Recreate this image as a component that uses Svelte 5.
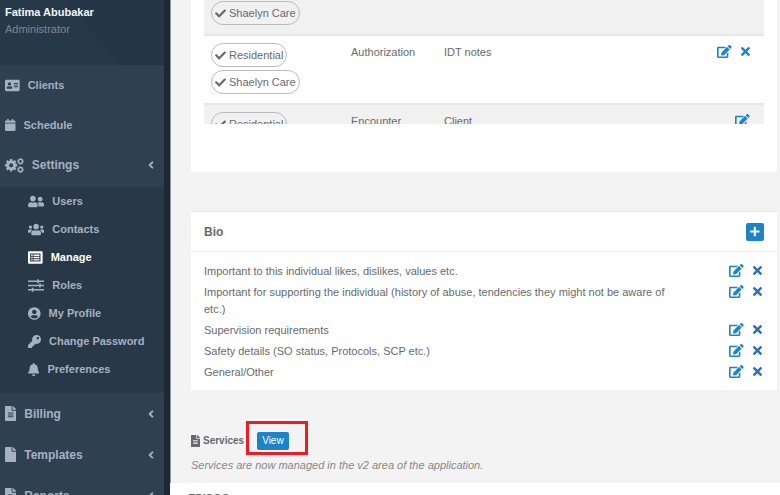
<script lang="ts">
  type Icon = { w: number; d: string };

  // toothed wheel outline with a round hole in the middle
  function gear(cx: number, cy: number, r: number, root: number, hole: number, teeth: number) {
    const pts: string[] = [];
    const step = (Math.PI * 2) / teeth;
    for (let i = 0; i < teeth; i++) {
      const a = i * step;
      for (const [f, rad] of [[-0.32, root], [-0.24, r], [0.24, r], [0.32, root]]) {
        const x = cx + Math.cos(a + f * step) * rad;
        const y = cy + Math.sin(a + f * step) * rad;
        pts.push(`${x.toFixed(1)} ${y.toFixed(1)}`);
      }
    }
    return `M${pts.join('L')}ZM${cx - hole} ${cy}a${hole} ${hole} 0 1 0 ${hole * 2} 0a${hole} ${hole} 0 1 0 ${-hole * 2} 0Z`;
  }

  const icons: Record<string, Icon> = {
    card: { w: 576, d: 'M528 32H48C21.5 32 0 53.5 0 80v352c0 26.5 21.5 48 48 48h480c26.5 0 48-21.5 48-48V80c0-26.5-21.5-48-48-48zm-352 96c35.3 0 64 28.7 64 64s-28.7 64-64 64-64-28.7-64-64 28.7-64 64-64zm112 236.8c0 10.6-10 19.2-22.4 19.2H86.4C74 384 64 375.4 64 364.8v-19.2c0-31.8 30.1-57.6 67.2-57.6h5c12.3 5.1 25.7 8 39.8 8s27.6-2.9 39.8-8h5c37.1 0 67.2 25.8 67.2 57.6v19.2zM512 312c0 4.4-3.6 8-8 8H360c-4.4 0-8-3.6-8-8v-16c0-4.4 3.6-8 8-8h144c4.4 0 8 3.6 8 8v16zm0-64c0 4.4-3.6 8-8 8H360c-4.4 0-8-3.6-8-8v-16c0-4.4 3.6-8 8-8h144c4.4 0 8 3.6 8 8v16zm0-64c0 4.4-3.6 8-8 8H360c-4.4 0-8-3.6-8-8v-16c0-4.4 3.6-8 8-8h144c4.4 0 8 3.6 8 8v16z' },
    calendar: { w: 448, d: 'M12 192h424c6.6 0 12 5.4 12 12v260c0 26.5-21.5 48-48 48H48c-26.5 0-48-21.5-48-48V204c0-6.6 5.4-12 12-12zm436-44v-36c0-26.5-21.5-48-48-48h-48V12c0-6.6-5.4-12-12-12h-40c-6.6 0-12 5.4-12 12v52H160V12c0-6.6-5.4-12-12-12h-40c-6.6 0-12 5.4-12 12v52H48C21.5 64 0 85.5 0 112v36c0 6.6 5.4 12 12 12h424c6.6 0 12-5.4 12-12z' },
    cogs: { w: 640, d: gear(210, 250, 216, 168, 72, 8) + gear(528, 116, 112, 94, 46, 7) + gear(528, 396, 112, 94, 46, 7) },
    friends: { w: 640, d: 'M192 256c61.9 0 112-50.1 112-112S253.9 32 192 32 80 82.1 80 144s50.1 112 112 112zm76.8 32h-8.3c-20.8 10-43.9 16-68.5 16s-47.6-6-68.5-16h-8.3C51.6 288 0 339.6 0 403.2V432c0 26.5 21.5 48 48 48h288c26.5 0 48-21.5 48-48v-28.8c0-63.6-51.6-115.2-115.2-115.2zM480 256c53 0 96-43 96-96s-43-96-96-96-96 43-96 96 43 96 96 96zm48 32h-3.8c-13.9 4.8-28.6 8-44.2 8s-30.3-3.2-44.2-8H432c-20.4 0-39.2 5.9-55.7 15.4 24.4 26.3 39.7 61.2 39.7 99.8v38.4c0 2.2-.5 4.3-.6 6.4H592c26.5 0 48-21.5 48-48 0-61.9-50.1-112-112-112z' },
    users: { w: 640, d: 'M96 224c35.3 0 64-28.7 64-64s-28.7-64-64-64-64 28.7-64 64 28.7 64 64 64zm448 0c35.3 0 64-28.7 64-64s-28.7-64-64-64-64 28.7-64 64 28.7 64 64 64zm32 32h-64c-17.6 0-33.5 7.1-45.1 18.6 40.3 22.1 68.9 62 75.1 109.4h66c17.7 0 32-14.3 32-32v-32c0-35.3-28.7-64-64-64zm-256 0c61.9 0 112-50.1 112-112S381.9 32 320 32 208 82.1 208 144s50.1 112 112 112zm76.8 32h-8.3c-20.8 10-43.9 16-68.5 16s-47.6-6-68.5-16h-8.3C179.6 288 128 339.6 128 403.2V432c0 26.5 21.5 48 48 48h288c26.5 0 48-21.5 48-48v-28.8c0-63.6-51.6-115.2-115.2-115.2zm-223.7-13.4C161.5 263.1 145.6 256 128 256H64c-35.3 0-64 28.7-64 64v32c0 17.7 14.3 32 32 32h65.9c6.3-47.4 34.9-87.3 75.2-109.4z' },
    list: { w: 576, d: 'M40 10H536Q576 10 576 50V462Q576 502 536 502H40Q0 502 0 462V50Q0 10 40 10ZM84 94V418H492V94ZM126 134H184V192H126ZM218 134H450V192H218ZM126 227H184V285H126ZM218 227H450V285H218ZM126 320H184V378H126ZM218 320H450V378H218Z' },
    sliders: { w: 640, d: 'M0 60H370V8H432V60H640V120H432V168H370V120H0ZM0 226H440V174H502V226H640V286H502V338H440V286H0ZM0 392H150V340H212V392H640V452H212V504H150V452H0Z' },
    profile: { w: 496, d: 'M248 8C111 8 0 119 0 256s111 248 248 248 248-111 248-248S385 8 248 8zm0 96c48.6 0 88 39.4 88 88s-39.4 88-88 88-88-39.4-88-88 39.4-88 88-88zm0 344c-58.7 0-111.3-26.6-146.5-68.2 18.8-35.4 55.6-59.8 98.5-59.8 2.4 0 4.8.4 7.1 1.1 13 4.2 26.6 6.9 40.9 6.9 14.3 0 28-2.7 40.9-6.9 2.3-.7 4.7-1.1 7.1-1.1 42.9 0 79.7 24.4 98.5 59.8C359.3 421.4 306.7 448 248 448z' },
    key: { w: 512, d: 'M512 176.001C512 273.203 433.202 352 336 352c-11.22 0-22.19-1.062-32.827-3.069l-24.012 27.014A23.999 23.999 0 0 1 261.223 384H224v40c0 13.255-10.745 24-24 24h-40v40c0 13.255-10.745 24-24 24H24c-13.255 0-24-10.745-24-24v-78.059c0-6.365 2.529-12.47 7.029-16.971l161.802-161.802C163.108 213.814 160 195.271 160 176 160 78.798 238.797.001 335.999 0 433.488-.001 512 78.511 512 176.001zM336 128c0 26.51 21.49 48 48 48s48-21.49 48-48-21.49-48-48-48-48 21.49-48 48z' },
    bell: { w: 448, d: 'M224 512c35.32 0 63.97-28.65 63.97-64H160.03c0 35.35 28.65 64 63.97 64zm215.39-149.71c-19.32-20.76-55.47-51.99-55.47-154.29 0-77.7-54.48-139.9-127.94-155.16V32c0-17.67-14.32-32-31.98-32s-31.98 14.33-31.98 32v20.84C118.56 68.1 64.08 130.3 64.08 208c0 102.3-36.15 133.53-55.47 154.29-6 6.45-8.66 14.16-8.61 21.71.11 16.4 12.98 32 32.1 32h383.8c19.12 0 32-15.6 32.1-32 .05-7.55-2.61-15.27-8.61-21.71z' },
    fileText: { w: 384, d: 'M224 136V0H24C10.7 0 0 10.7 0 24v464c0 13.3 10.7 24 24 24h336c13.3 0 24-10.7 24-24V160H248c-13.2 0-24-10.8-24-24zm64 236c0 6.6-5.4 12-12 12H108c-6.6 0-12-5.4-12-12v-8c0-6.6 5.4-12 12-12h168c6.6 0 12 5.4 12 12v8zm0-64c0 6.6-5.4 12-12 12H108c-6.6 0-12-5.4-12-12v-8c0-6.6 5.4-12 12-12h168c6.6 0 12 5.4 12 12v8zm0-72v8c0 6.6-5.4 12-12 12H108c-6.6 0-12-5.4-12-12v-8c0-6.6 5.4-12 12-12h168c6.6 0 12 5.4 12 12zm96-114.1v6.1H256V0h6.1c6.4 0 12.5 2.5 17 7l97.9 98c4.5 4.5 7 10.6 7 16.9z' },
    file: { w: 384, d: 'M224 136V0H24C10.7 0 0 10.7 0 24v464c0 13.3 10.7 24 24 24h336c13.3 0 24-10.7 24-24V160H248c-13.2 0-24-10.8-24-24zm160-14.1v6.1H256V0h6.1c6.4 0 12.5 2.5 17 7l97.9 98c4.5 4.5 7 10.6 7 16.9z' },
    angle: { w: 256, d: 'M31.7 239l136-136c9.4-9.4 24.6-9.4 33.9 0l22.6 22.6c9.4 9.4 9.4 24.6 0 33.9L127.9 256l96.4 96.4c9.4 9.4 9.4 24.6 0 33.9L201.7 409c-9.4 9.4-24.6 9.4-33.9 0l-136-136c-9.5-9.4-9.5-24.6-.1-34z' },
    check: { w: 512, d: 'M173.898 439.404l-166.4-166.4c-9.997-9.997-9.997-26.206 0-36.204l36.203-36.204c9.997-9.998 26.207-9.998 36.204 0L192 312.69 432.095 72.596c9.997-9.997 26.207-9.997 36.204 0l36.203 36.204c9.997 9.997 9.997 26.206 0 36.204l-294.4 294.401c-9.998 9.997-26.207 9.997-36.204-.001z' },
    edit: { w: 576, d: 'M402.6 83.2l90.2 90.2c3.8 3.8 3.8 10 0 13.8L274.4 405.6l-92.8 10.3c-12.4 1.4-22.9-9.1-21.5-21.5l10.3-92.8L388.8 83.2c3.8-3.8 10-3.8 13.8 0zm162-22.9l-48.8-48.8c-15.2-15.2-39.9-15.2-55.2 0l-35.4 35.4c-3.8 3.8-3.8 10 0 13.8l90.2 90.2c3.8 3.8 10 3.8 13.8 0l35.4-35.4c15.2-15.3 15.2-40 0-55.2zM384 346.2V448H64V128h229.8c3.2 0 6.2-1.3 8.5-3.5l40-40c7.6-7.6 2.2-20.5-8.5-20.5H48C21.5 64 0 85.5 0 112v352c0 26.5 21.5 48 48 48h352c26.5 0 48-21.5 48-48V306.2c0-10.7-12.9-16-20.5-8.5l-40 40c-2.2 2.3-3.5 5.3-3.5 8.5z' },
    times: { w: 352, d: 'M242.72 256l100.07-100.07c12.28-12.28 12.28-32.19 0-44.48l-22.24-22.24c-12.28-12.28-32.19-12.28-44.48 0L176 189.28 75.93 89.21c-12.28-12.28-32.19-12.28-44.48 0L9.21 111.45c-12.28 12.28-12.28 32.19 0 44.48L109.28 256 9.21 356.07c-12.28 12.28-12.28 32.19 0 44.48l22.24 22.24c12.28 12.28 32.2 12.28 44.48 0L176 322.72l100.07 100.07c12.28 12.28 32.2 12.28 44.48 0l22.24-22.24c12.28-12.28 12.28-32.19 0-44.48L242.72 256z' },
    plus: { w: 448, d: 'M416 208H272V64c0-17.67-14.33-32-32-32h-32c-17.67 0-32 14.33-32 32v144H32c-17.67 0-32 14.33-32 32v32c0 17.67 14.33 32 32 32h144v144c0 17.67 14.33 32 32 32h32c17.67 0 32-14.33 32-32V304h144c17.67 0 32-14.33 32-32v-32c0-17.67-14.33-32-32-32z' },
  };

  const topMenu = [
    { label: 'Clients', icon: 'card' },
    { label: 'Schedule', icon: 'calendar' },
  ];
  const settingsMenu = [
    { label: 'Users', icon: 'friends' },
    { label: 'Contacts', icon: 'users' },
    { label: 'Manage', icon: 'list' },
    { label: 'Roles', icon: 'sliders' },
    { label: 'My Profile', icon: 'profile' },
    { label: 'Change Password', icon: 'key' },
    { label: 'Preferences', icon: 'bell' },
  ];
  const bottomMenu = [
    { label: 'Billing', icon: 'fileText' },
    { label: 'Templates', icon: 'file' },
    { label: 'Reports', icon: 'fileText' },
  ];

  const rows = [
    { tags: ['Shaelyn Care'], type: '', name: '', edit: false, remove: false },
    { tags: ['Residential', 'Shaelyn Care'], type: 'Authorization', name: 'IDT notes', edit: true, remove: true },
    { tags: ['Residential'], type: 'Encounter', name: 'Client', edit: true, remove: false },
  ];

  let bio = $state([
    'Important to this individual likes, dislikes, values etc.',
    'Important for supporting the individual (history of abuse, tendencies they might not be aware of etc.)',
    'Supervision requirements',
    'Safety details (SO status, Protocols, SCP etc.)',
    'General/Other',
  ]);
  let active = $state('Manage');
</script>

{#snippet icon(name: string)}
  <svg class="icon icon-{name}" viewBox="0 0 {icons[name].w} 512" aria-hidden="true">
    <path d={icons[name].d} fill-rule="evenodd" />
  </svg>
{/snippet}

<div class="page">
  <aside class="sidebar">
    <div class="profile">
      <strong>Fatima Abubakar</strong>
      <span>Administrator</span>
    </div>
    <nav>
      {#each topMenu as item}
        <a class="item small" href="#{item.label}">{@render icon(item.icon)}{item.label}</a>
      {/each}
      <a class="item" href="#Settings">{@render icon('cogs')}Settings<span class="arrow">{@render icon('angle')}</span></a>
      <div class="submenu">
        {#each settingsMenu as item}
          <a class="sub" class:active={active === item.label} href="#{item.label}" onclick={() => (active = item.label)}>
            {@render icon(item.icon)}{item.label}
          </a>
        {/each}
      </div>
      {#each bottomMenu as item}
        <a class="item tall" href="#{item.label}">{@render icon(item.icon)}{item.label}<span class="arrow">{@render icon('angle')}</span></a>
      {/each}
    </nav>
  </aside>

  <main class="content">
    <section class="panel types">
      <div class="table-wrap">
        <table>
          <tbody>
            {#each rows as row}
              <tr>
                <td class="tags">
                  {#each row.tags as tag}
                    <span class="tag">{@render icon('check')}{tag}</span>
                  {/each}
                </td>
                <td class="type">{row.type}</td>
                <td>{row.name}</td>
                <td class="tools">
                  {#if row.edit}<button class="tool" aria-label="Edit {row.name}">{@render icon('edit')}</button>{/if}
                  {#if row.remove}<button class="tool" aria-label="Remove {row.name}">{@render icon('times')}</button>{/if}
                </td>
              </tr>
            {/each}
          </tbody>
        </table>
      </div>
    </section>

    <section class="panel bio">
      <header>
        <h2>Bio</h2>
        <button class="add" aria-label="Add bio section">{@render icon('plus')}</button>
      </header>
      <ul>
        {#each bio as entry, i}
          <li>
            <span class="entry">{entry}</span>
            <button class="tool" aria-label="Edit {entry}">{@render icon('edit')}</button>
            <button class="tool remove" aria-label="Remove {entry}" onclick={() => bio.splice(i, 1)}>{@render icon('times')}</button>
          </li>
        {/each}
      </ul>
    </section>

    <section class="services">
      <div class="services-head">
        <h3>{@render icon('fileText')}Services</h3>
        <div class="marker"><button class="view">View</button></div>
      </div>
      <p>Services are now managed in the v2 area of the application.</p>
    </section>

    <footer>EPISOC</footer>
  </main>
</div>

<style>
  :global(body) { margin: 0; overflow: hidden; }
  .page { display: flex; height: 100vh; overflow: hidden; background: #f3f3f4; color: #676a6c; font: 11px/16px "Liberation Sans", Arial, sans-serif; }
  .icon { display: block; height: 12px; fill: currentColor; flex: none; }
  a { color: inherit; text-decoration: none; }
  button { font: inherit; border: 0; padding: 0; cursor: pointer; }
  h2, h3, p, ul { margin: 0; padding: 0; }

  .sidebar { flex: 0 0 164px; background: #2f4050; color: #a7b1c2; border-right: 6px solid #1d2832; box-shadow: 1px 0 #8a949e; font-weight: 700; }
  .profile { height: 60px; padding: 5px 5px 0; display: flex; flex-direction: column; background: linear-gradient(50deg, #263949 55%, #243646 55%); }
  .profile strong { color: #f2f6fa; line-height: 15px; }
  .profile span { color: #80868b; font-weight: 400; line-height: 18px; }
  .item { display: flex; align-items: center; gap: 8px; height: 40px; padding: 0 10px 0 5px; font-size: 12px; }
  .item.small { font-size: 11px; }
  .item.tall { height: 41px; }
  .arrow { margin-left: auto; }
  .submenu { margin-top: 2px; padding-bottom: 10px; background: #293846; }
  .sub { display: flex; align-items: center; gap: 8px; height: 28px; padding-left: 28px; }
  .sub .icon, .icon-card { height: 13px; }
  .sub.active { color: #fff; }
  .icon-cogs, .tall .icon-fileText, .icon-file { height: 15px; }

  .content { flex: 1; min-width: 0; display: flex; flex-direction: column; }
  .content > * { flex-shrink: 0; }
  .panel { margin: 0 3px 0 21px; background: #fff; }
  .types { padding: 0 13px 48px; }
  .table-wrap { height: 124px; overflow: hidden; }
  table { width: 100%; border-collapse: collapse; }
  tr:nth-child(odd) { background: #f1f1f1; }
  td { padding: 8px 7px 6px; vertical-align: top; text-align: left; }
  tr + tr td { border-top: 2px solid #e7e7e7; }
  .tags { width: 126px; padding-top: 7px; }
  .tools { padding-top: 9px; }
  tr:first-child td { padding-top: 1px; }
  .type { width: 79px; }
  .tag { display: flex; align-items: center; gap: 3px; width: max-content; height: 22px; margin-bottom: 3px; padding: 0 3px; border: 1px solid #bbb; border-radius: 12px; }
  .icon-check { height: 11px; }
  td.tools { text-align: right; padding-right: 14px; }
  .tool { display: inline-block; background: none; color: #1c84c6; vertical-align: top; }
  .tool .icon { height: 13px; }
  .tool.remove { color: #2a70b4; }
  .tools .tool + .tool { margin-left: 6px; }

  .bio { margin-top: 40px; box-shadow: 0 -1px #e9e9ea; }
  .bio header { display: flex; align-items: center; justify-content: space-between; height: 39px; padding: 0 13px; border-bottom: 1px solid #ececec; }
  h2 { font-size: 12px; }
  .add { display: grid; place-items: center; width: 18px; height: 18px; border-radius: 2px; background: #1c84c6; color: #fff; }
  .add .icon { height: 11px; }
  ul { list-style: none; padding: 9px 15px 7px 13px; }
  li { display: flex; align-items: flex-start; gap: 9px; padding: 2px 0; line-height: 17px; }
  li .tool { padding-top: 1px; }
  .entry { flex: 1; padding-right: 50px; }

  .services { padding: 31px 21px 10px; }
  .services-head { display: flex; align-items: flex-end; gap: 2px; }
  h3 { display: flex; align-items: center; gap: 3px; font-size: 10px; line-height: 28px; }
  .marker { padding: 8px 16px 2px 8px; border: 3px solid #ed1c24; }
  .view { display: block; padding: 1px 5px; border-radius: 2px; background: #1c84c6; color: #fff; font-size: 10px; }
  .services p { padding-top: 2px; font-style: italic; color: #888; }
  footer { padding: 7px 18px; background: #fff; font-weight: 700; }
</style>
